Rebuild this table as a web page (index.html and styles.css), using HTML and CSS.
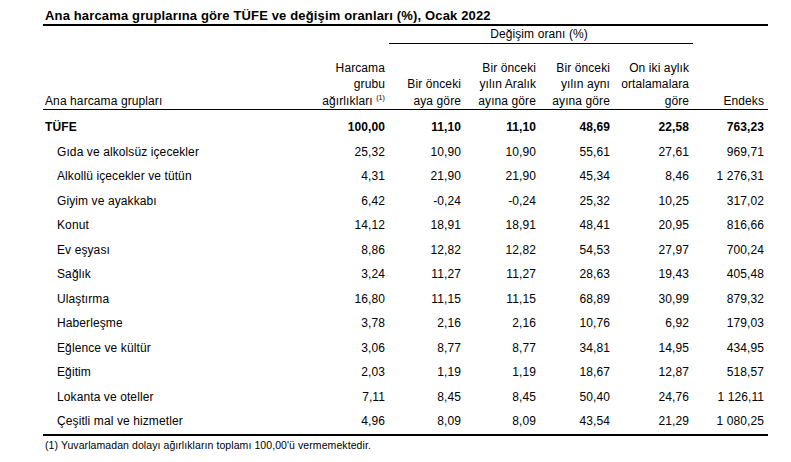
FILE: index.html
```html
<!DOCTYPE html>
<html lang="tr">
<head>
<meta charset="utf-8">
<link rel="stylesheet" href="styles.css">
</head>
<body>
<div class="page">
  <h1 class="title">Ana harcama gruplarına göre TÜFE ve değişim oranları (%), Ocak 2022</h1>
  <table class="tbl">
    <colgroup>
      <col class="c-name"><col class="c-w"><col class="c-2"><col class="c-3"><col class="c-4"><col class="c-5"><col class="c-6">
    </colgroup>
    <thead>
      <tr class="row-group">
        <th></th><th></th>
        <th colspan="4" class="group-head"><span class="group-label">Değişim oranı (%)</span></th>
        <th></th>
      </tr>
      <tr class="row-head">
        <th class="name">Ana harcama grupları</th>
        <th class="num">Harcama<br>grubu<br>ağırlıkları <sup class="fn">(1)</sup></th>
        <th class="num">Bir önceki<br>aya göre</th>
        <th class="num">Bir önceki<br>yılın Aralık<br>ayına göre</th>
        <th class="num">Bir önceki<br>yılın aynı<br>ayına göre</th>
        <th class="num">On iki aylık<br>ortalamalara<br>göre</th>
        <th class="num">Endeks</th>
      </tr>
    </thead>
    <tbody>
      <tr class="total first">
        <td class="name">TÜFE</td><td class="num">100,00</td><td class="num">11,10</td><td class="num">11,10</td><td class="num">48,69</td><td class="num">22,58</td><td class="num">763,23</td>
      </tr>
      <tr><td class="name sub">Gıda ve alkolsüz içecekler</td><td class="num">25,32</td><td class="num">10,90</td><td class="num">10,90</td><td class="num">55,61</td><td class="num">27,61</td><td class="num">969,71</td></tr>
      <tr><td class="name sub">Alkollü içecekler ve tütün</td><td class="num">4,31</td><td class="num">21,90</td><td class="num">21,90</td><td class="num">45,34</td><td class="num">8,46</td><td class="num">1 276,31</td></tr>
      <tr><td class="name sub">Giyim ve ayakkabı</td><td class="num">6,42</td><td class="num">-0,24</td><td class="num">-0,24</td><td class="num">25,32</td><td class="num">10,25</td><td class="num">317,02</td></tr>
      <tr><td class="name sub">Konut</td><td class="num">14,12</td><td class="num">18,91</td><td class="num">18,91</td><td class="num">48,41</td><td class="num">20,95</td><td class="num">816,66</td></tr>
      <tr><td class="name sub">Ev eşyası</td><td class="num">8,86</td><td class="num">12,82</td><td class="num">12,82</td><td class="num">54,53</td><td class="num">27,97</td><td class="num">700,24</td></tr>
      <tr><td class="name sub">Sağlık</td><td class="num">3,24</td><td class="num">11,27</td><td class="num">11,27</td><td class="num">28,63</td><td class="num">19,43</td><td class="num">405,48</td></tr>
      <tr><td class="name sub">Ulaştırma</td><td class="num">16,80</td><td class="num">11,15</td><td class="num">11,15</td><td class="num">68,89</td><td class="num">30,99</td><td class="num">879,32</td></tr>
      <tr><td class="name sub">Haberleşme</td><td class="num">3,78</td><td class="num">2,16</td><td class="num">2,16</td><td class="num">10,76</td><td class="num">6,92</td><td class="num">179,03</td></tr>
      <tr><td class="name sub">Eğlence ve kültür</td><td class="num">3,06</td><td class="num">8,77</td><td class="num">8,77</td><td class="num">34,81</td><td class="num">14,95</td><td class="num">434,95</td></tr>
      <tr><td class="name sub">Eğitim</td><td class="num">2,03</td><td class="num">1,19</td><td class="num">1,19</td><td class="num">18,67</td><td class="num">12,87</td><td class="num">518,57</td></tr>
      <tr><td class="name sub">Lokanta ve oteller</td><td class="num">7,11</td><td class="num">8,45</td><td class="num">8,45</td><td class="num">50,40</td><td class="num">24,76</td><td class="num">1 126,11</td></tr>
      <tr class="last"><td class="name sub">Çeşitli mal ve hizmetler</td><td class="num">4,96</td><td class="num">8,09</td><td class="num">8,09</td><td class="num">43,54</td><td class="num">21,29</td><td class="num">1 080,25</td></tr>
    </tbody>
  </table>
  <p class="footnote">(1) Yuvarlamadan dolayı ağırlıkların toplamı 100,00'ü vermemektedir.</p>
</div>
</body>
</html>
```

FILE: styles.css
```css
html, body {
  margin: 0;
  padding: 0;
  background: #ffffff;
}

body {
  font-family: "Liberation Sans", Arial, sans-serif;
  color: #000000;
}

.page {
  width: 725px;
  margin-left: 43px;
}

.title {
  margin: 0;
  padding: 8px 0 0 2px;
  font-size: 13px;
  line-height: 16px;
  font-weight: bold;
  letter-spacing: 0.15px;
  border-bottom: 2px solid #000;
}

.tbl {
  width: 725px;
  border-collapse: collapse;
  table-layout: fixed;
  font-size: 12px;
  letter-spacing: 0.1px;
}

.c-name { width: 266px; }
.c-w { width: 80px; }
.c-2 { width: 76px; }
.c-3 { width: 75px; }
.c-4 { width: 74px; }
.c-5 { width: 79px; }
.c-6 { width: 75px; }

.tbl th, .tbl td {
  padding: 0;
  font-weight: normal;
}

.row-group th {
  height: 17px;
  line-height: 17px;
  vertical-align: middle;
}

.group-head {
  text-align: center;
  border-bottom: 1px solid #000;
}

.group-label {
  position: relative;
  left: -2px;
}

.row-head th {
  height: 65px;
  line-height: 16.5px;
  vertical-align: bottom;
  border-bottom: 1px solid #000;
}

.tbl .name {
  text-align: left;
  padding-left: 2px;
}

.tbl .num {
  text-align: right;
  padding-right: 4px;
}

.fn {
  font-size: 7px;
  vertical-align: 5px;
  line-height: 0;
}

.tbl td {
  line-height: 24.5px;
  vertical-align: middle;
}

.tbl tr.first td {
  padding-top: 5px;
}

.tbl tr.total td {
  font-weight: bold;
}

.tbl td.sub {
  padding-left: 14px;
}

.tbl tr.last td {
  border-bottom: 2px solid #000;
}

.footnote {
  margin: 0;
  padding: 2px 0 0 2px;
  font-size: 10.5px;
  line-height: 14px;
  letter-spacing: 0.08px;
}
```
